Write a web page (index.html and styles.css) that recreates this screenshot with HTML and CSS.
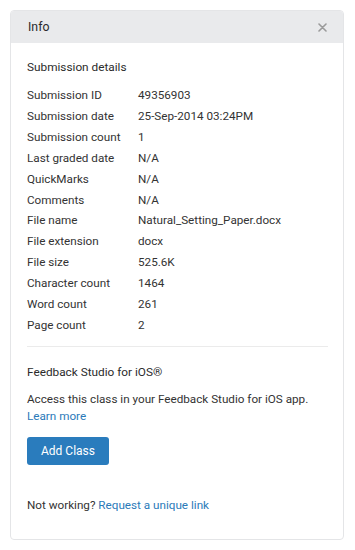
FILE: index.html
```html
<!DOCTYPE html>
<html lang="en">
<head>
  <meta charset="UTF-8">
  <meta name="viewport" content="width=device-width, initial-scale=1.0">
  <title>Info</title>
  <link rel="stylesheet" href="styles.css">
</head>
<body>
  <div class="panel">
    <div class="panel-header">
      <span class="panel-title">Info</span>
      <span class="close" aria-label="Close">
        <svg width="9" height="9" viewBox="0 0 9 9"><path d="M1 1L8 8M8 1L1 8" stroke="#9a9a9a" stroke-width="1.6" stroke-linecap="round"/></svg>
      </span>
    </div>
    <div class="panel-body">
      <h2>Submission details</h2>
      <table class="details">
        <tr><td>Submission ID</td><td>49356903</td></tr>
        <tr><td>Submission date</td><td>25-Sep-2014 03:24PM</td></tr>
        <tr><td>Submission count</td><td>1</td></tr>
        <tr><td>Last graded date</td><td>N/A</td></tr>
        <tr><td>QuickMarks</td><td>N/A</td></tr>
        <tr><td>Comments</td><td>N/A</td></tr>
        <tr><td>File name</td><td>Natural_Setting_Paper.docx</td></tr>
        <tr><td>File extension</td><td>docx</td></tr>
        <tr><td>File size</td><td>525.6K</td></tr>
        <tr><td>Character count</td><td>1464</td></tr>
        <tr><td>Word count</td><td>261</td></tr>
        <tr><td>Page count</td><td>2</td></tr>
      </table>
      <hr>
      <h2>Feedback Studio for iOS®</h2>
      <p class="intro">Access this class in your Feedback Studio for iOS app.<br><a href="#">Learn more</a></p>
      <button class="btn">Add Class</button>
      <p class="help">Not working? <a href="#">Request a unique link</a></p>
    </div>
  </div>
</body>
</html>
```

FILE: styles.css
```css
body {
  font-family: Roboto, "Liberation Sans", sans-serif;
  font-size: 11.7px;
  color: #333;
  margin: 0;
  padding: 10px 11px 10px 10px;
  background: #fff;
}
.panel {
  border: 1px solid #e4e5e7;
  border-radius: 4px;
  overflow: hidden;
}
.panel-header {
  display: flex;
  align-items: center;
  justify-content: space-between;
  height: 32px;
  padding: 0 16px 0 17px;
  background: #e9eaec;
}
.panel-title {
  font-size: 12.3px;
  color: #2b2b2b;
}
.close {
  display: flex;
  width: 9px;
  height: 9px;
  margin-top: 1px;
}
.panel-body {
  padding: 15px 15px 25px 16px;
}
h2 {
  font-size: 11.8px;
  font-weight: normal;
  line-height: 18px;
  margin: 0;
  color: #2b2b2b;
}
.details {
  border-collapse: collapse;
  margin-top: 9px;
}
.details td {
  padding: 0;
  line-height: 20.9px;
  height: 20.9px;
  white-space: nowrap;
}
.details td:first-child {
  width: 111px;
}
hr {
  border: 0;
  border-top: 1px solid #ebebeb;
  margin: 10px 0 16px 0;
}
.intro {
  margin: 10px 0 0 0;
  line-height: 17px;
}
a {
  color: #2a7ab9;
  text-decoration: none;
}
.btn {
  display: block;
  margin-top: 12px;
  width: 82px;
  height: 28px;
  border: 0;
  border-radius: 3px;
  background: #2a7cbd;
  color: #fff;
  font-family: inherit;
  font-size: 12px;
  padding: 0;
}
.help {
  margin: 32px 0 0 0;
  line-height: 17px;
}
```
